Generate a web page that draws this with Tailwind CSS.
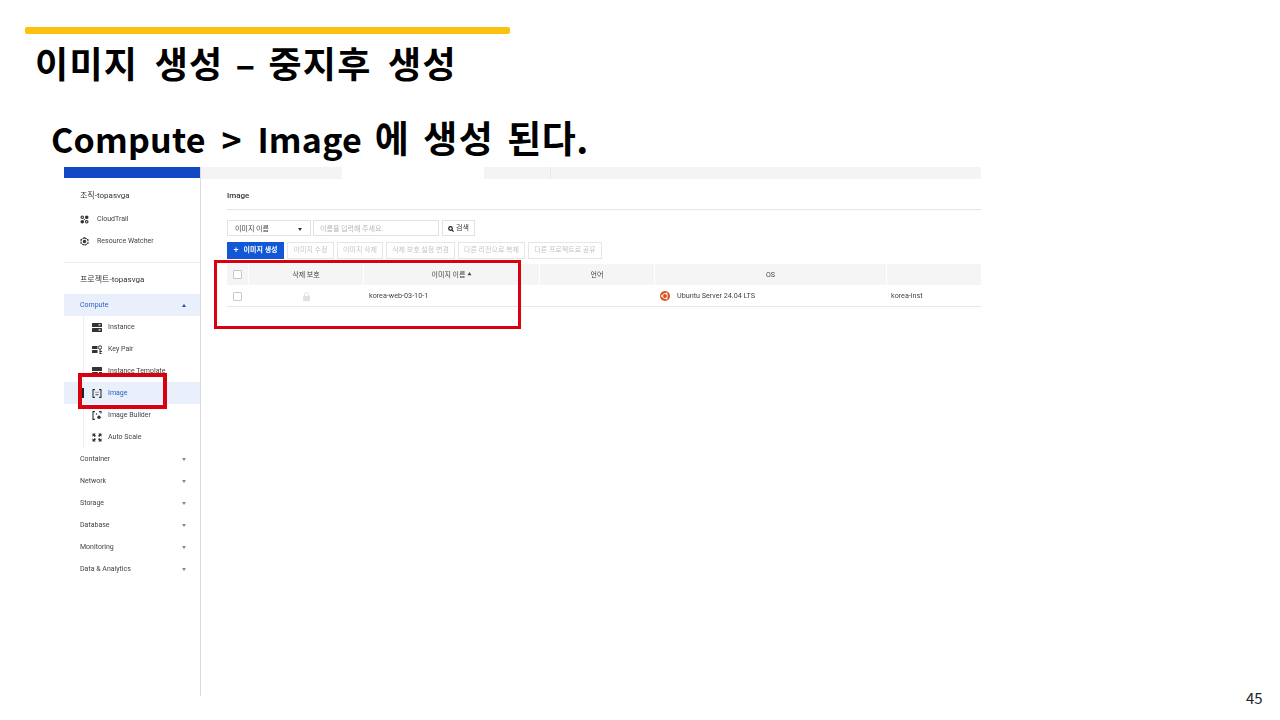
<!DOCTYPE html>
<html lang="ko">
<head>
    <meta charset="UTF-8">
    <title>이미지 생성 - 중지후 생성</title>
    <script src="https://cdn.jsdelivr.net/npm/@tailwindcss/browser@4"></script>
</head>
<body class="relative w-[1280px] h-[720px] overflow-hidden bg-white font-['Noto_Sans_CJK_KR',sans-serif]">
    <!-- Slide heading -->
    <div class="ml-[25px] mt-[27px] w-[485px] h-[7px] rounded-[2px] bg-[#fcc10f]"></div>
    <h1 class="ml-[35px] mt-[2px] h-[52px] flex gap-[12px] text-[36px] leading-[52px] font-bold text-black tracking-[1.3px] [word-spacing:5px] whitespace-pre"><span>이미지 생성</span><span>–</span><span>중지후 생성</span></h1>
    <h2 class="ml-[51px] mt-[23px] h-[52px] text-[37px] leading-[52px] font-bold text-black tracking-[1.5px] [word-spacing:1px] whitespace-pre"><span class="text-[34px] tracking-[0.2px] [word-spacing:6px]">Compute &gt; Image</span> 에 생성 <span class="tracking-[0.5px]">된다.</span></h2>

    <!-- Console screenshot -->
    <div class="absolute left-[64px] top-[167px] w-[917px] h-[529px] flex font-['Roboto','Noto_Sans_CJK_KR',sans-serif] text-[7px] text-[#444] blur-[0.3px]">
        <!-- Sidebar -->
        <aside class="w-[137px] shrink-0 border-r border-[#dcdcdc]">
            <div class="h-[11px] bg-[#1248c4]"></div>
            <div class="h-[30px] pl-4 pt-[6px] flex items-center text-[8px] text-[#333]">조직-topasvga</div>
            <div class="h-[22px] pl-4 pt-px flex items-center gap-[8px]">
                <svg class="w-[9px] h-[9px]" viewBox="0 0 10 10" fill="#333"><path d="M.5 2.500a2 2 0 0 1 4 0 2 2 0 0 1-4 0zM5.500 2.500a2 2 0 0 1 4 0 2 2 0 0 1-4 0zM.5 7.500a2 2 0 0 1 4 0 2 2 0 0 1-4 0zM5.500 7.500a2 2 0 0 1 4 0 2 2 0 0 1-4 0z"/><path d="M4 4 6 6M6 4 4 6" stroke="#333" stroke-width=".8"/><circle cx="2.500" cy="2.500" r=".7" fill="#fff"/><circle cx="7.500" cy="7.500" r=".7" fill="#fff"/></svg>
                <span>CloudTrail</span>
            </div>
            <div class="h-[22px] pl-4 pt-px flex items-center gap-[8px]">
                <svg class="w-[9px] h-[9px]" viewBox="0 0 10 10" fill="none" stroke="#333" stroke-width="1.3"><path d="M5 .8 8.800 3v4L5 9.200 1.200 7V3z" stroke-dasharray="2.600 .7"/><circle cx="5" cy="5" r="1.200" fill="#333"/></svg>
                <span>Resource Watcher</span>
            </div>
            <div class="h-[11px] border-b border-[#eeeeee]"></div>
            <div class="h-[31px] pl-4 pt-[2px] flex items-center text-[8px] text-[#333]">프로젝트-topasvga</div>

            <div class="h-[22px] pl-4 pr-[14px] flex items-center justify-between bg-[#e9effb] text-[#2a5fc4]">
                <span>Compute</span>
                <span class="w-0 h-0 border-x-[2.5px] border-x-transparent border-b-[3px] border-b-[#2a4f9c]"></span>
            </div>

            <!-- Compute children -->
            <div class="relative">
                <div class="absolute left-[19px] top-0 bottom-0 w-px bg-[#eeeeee]"></div>
                <div class="h-[22px] pl-7 flex items-center gap-[6px]">
                    <svg class="w-[10px] h-[9px]" viewBox="0 0 10 9" fill="#333"><rect width="10" height="4" rx=".6"/><rect y="5" width="10" height="4" rx=".6"/><rect x="6.500" y="1.300" width="2" height="1.200" fill="#fff"/><rect x="6.500" y="6.300" width="2" height="1.200" fill="#fff"/></svg>
                    <span>Instance</span>
                </div>
                <div class="h-[22px] pl-7 flex items-center gap-[6px]">
                    <svg class="w-[10px] h-[9px]" viewBox="0 0 10 9" fill="#333"><rect y="1" width="5.500" height="3" rx=".5"/><rect y="5" width="5.500" height="3" rx=".5"/><circle cx="8" cy="2.500" r="1.700" fill="none" stroke="#333"/><path d="M8 4v5M8 6.500h2M8 8.500h1.600" stroke="#333" fill="none"/></svg>
                    <span>Key Pair</span>
                </div>
                <div class="h-[22px] pl-7 flex items-center gap-[6px]">
                    <svg class="w-[10px] h-[9px]" viewBox="0 0 10 9" fill="#333"><rect width="10" height="4" rx=".6"/><rect y="5" width="6" height="4" rx=".6"/><path d="M7 5.500h3M7 8.500h3" stroke="#333" fill="none"/></svg>
                    <span>Instance Template</span>
                </div>
                <div class="relative h-[22px] pl-7 flex items-center gap-[6px] bg-[#e9effb] text-[#2a5fc4]">
                    <span class="absolute left-[18px] top-[6px] w-[2px] h-[10px] bg-[#222]"></span>
                    <svg class="w-[10px] h-[9px]" viewBox="0 0 10 9" fill="none" stroke="#333" stroke-width="1.100"><path d="M3 .6H1v7.800h2M7 .6h2v7.800H7"/><path d="M3.500 3.300h1M5.500 3.300h1M3.500 5.700h3" stroke-width=".9"/></svg>
                    <span>Image</span>
                </div>
                <div class="h-[22px] pl-7 flex items-center gap-[6px]">
                    <svg class="w-[10px] h-[9px]" viewBox="0 0 10 9" fill="none" stroke="#333" stroke-width="1.100"><path d="M3 .6H1v7.800h2M7 .6h2v2"/><circle cx="7" cy="6.300" r="1.700" fill="#333" stroke="none"/><circle cx="4.500" cy="3" r=".8" fill="#333" stroke="none"/></svg>
                    <span>Image Builder</span>
                </div>
                <div class="h-[22px] pl-7 flex items-center gap-[6px]">
                    <svg class="w-[10px] h-[9px]" viewBox="0 0 10 9" fill="#333"><path d="M.5.5h3.300L2.800 1.500 4 2.700 2.700 4 1.500 2.800.5 3.800zM9.500.5H6.200l1 1L6 2.700 7.300 4l1.200-1.200 1 1zM.5 8.500H3.800l-1-1L4 6.300 2.700 5 1.500 6.200l-1-1zM9.500 8.500H6.200l1-1L6 6.300 7.300 5l1.200 1.200 1-1z"/></svg>
                    <span>Auto Scale</span>
                </div>
            </div>

            <!-- Collapsed groups -->
            <div class="h-[22px] pl-4 pr-[14px] flex items-center justify-between"><span>Container</span><span class="w-0 h-0 border-x-[2.5px] border-x-transparent border-t-[3px] border-t-[#888]"></span></div>
            <div class="h-[22px] pl-4 pr-[14px] flex items-center justify-between"><span>Network</span><span class="w-0 h-0 border-x-[2.5px] border-x-transparent border-t-[3px] border-t-[#888]"></span></div>
            <div class="h-[22px] pl-4 pr-[14px] flex items-center justify-between"><span>Storage</span><span class="w-0 h-0 border-x-[2.5px] border-x-transparent border-t-[3px] border-t-[#888]"></span></div>
            <div class="h-[22px] pl-4 pr-[14px] flex items-center justify-between"><span>Database</span><span class="w-0 h-0 border-x-[2.5px] border-x-transparent border-t-[3px] border-t-[#888]"></span></div>
            <div class="h-[22px] pl-4 pr-[14px] flex items-center justify-between"><span>Monitoring</span><span class="w-0 h-0 border-x-[2.5px] border-x-transparent border-t-[3px] border-t-[#888]"></span></div>
            <div class="h-[22px] pl-4 pr-[14px] flex items-center justify-between"><span>Data &amp; Analytics</span><span class="w-0 h-0 border-x-[2.5px] border-x-transparent border-t-[3px] border-t-[#888]"></span></div>
        </aside>

        <!-- Main area -->
        <main class="flex-1 min-w-0">
            <!-- Tabs -->
            <div class="flex h-[12px]">
                <div class="w-[141px] bg-[#f4f4f4]"></div>
                <div class="w-[142px] bg-white"></div>
                <div class="w-[66px] bg-[#f4f4f4]"></div>
                <div class="flex-1 bg-[#f4f4f4] border-l border-[#e8e8e8]"></div>
            </div>

            <div class="pl-[26px]">
                <div class="h-[31px] pt-[3px] flex items-center border-b border-[#e6e6e6] text-[8px] font-medium text-[#333]">Image</div>

                <!-- Search -->
                <div class="mt-[10px] flex h-[16px] text-[7px]">
                    <div class="w-[84px] px-[7px] pt-[2px] flex items-center justify-between border border-[#e2e2e2] text-[#444]">
                        <span>이미지 이름</span>
                        <span class="mr-[1px] w-0 h-0 border-x-[2.5px] border-x-transparent border-t-[3px] border-t-[#333]"></span>
                    </div>
                    <div class="ml-[2px] w-[126px] px-[6px] pt-[2px] flex items-center border border-[#e2e2e2] text-[#b5b5b5]">이름을 입력해 주세요.</div>
                    <div class="ml-[3px] w-[33px] pt-px flex items-center justify-center gap-[2px] border border-[#e2e2e2] text-[#333]">
                        <svg class="w-[6px] h-[6px]" viewBox="0 0 6 6" fill="none" stroke="#222" stroke-width="1.200"><circle cx="2.500" cy="2.500" r="1.800"/><path d="m3.800 3.800 1.800 1.800"/></svg>
                        <span>검색</span>
                    </div>
                </div>

                <!-- Action buttons -->
                <div class="mt-[6px] flex h-[17px] text-[#c4c4c4]">
                    <div class="w-[57px] flex items-center justify-center gap-[5px] bg-[#1257d6] text-white font-bold"><span class="text-[9px] font-normal">+</span><span>이미지 생성</span></div>
                    <div class="ml-[3px] w-[47px] flex items-center justify-center border border-[#e6e6e6]">이미지 수정</div>
                    <div class="ml-[3px] w-[46px] flex items-center justify-center border border-[#e6e6e6]">이미지 삭제</div>
                    <div class="ml-[3px] w-[69px] flex items-center justify-center border border-[#e6e6e6]">삭제 보호 설정 변경</div>
                    <div class="ml-[3px] w-[67px] flex items-center justify-center border border-[#e6e6e6]">다른 리전으로 복제</div>
                    <div class="ml-[3px] w-[74px] flex items-center justify-center border border-[#e6e6e6]">다른 프로젝트로 공유</div>
                </div>

                <!-- Table header -->
                <div class="mt-[5px] flex h-[21px] items-center gap-px bg-white text-[#444]">
                    <div class="w-[21px] h-full bg-[#f5f5f5] flex items-center pl-[6px]"><span class="w-[9px] h-[9px] rounded-[1px] border border-[#c8c8c8] bg-white"></span></div>
                    <div class="w-[114px] h-full pt-px bg-[#f5f5f5] flex items-center justify-center">삭제 보호</div>
                    <div class="w-[175px] h-full pt-px bg-[#f5f5f5] flex items-center justify-center gap-[2px]">이미지 이름<span class="text-[4px]">▲</span></div>
                    <div class="w-[114px] h-full pt-px bg-[#f5f5f5] flex items-center justify-center">언어</div>
                    <div class="w-[231px] h-full pt-px bg-[#f5f5f5] flex items-center justify-center">OS</div>
                    <div class="flex-1 h-full bg-[#f5f5f5]"></div>
                </div>

                <!-- Table row -->
                <div class="flex h-[22px] pt-px items-center gap-px border-b border-[#e8e8e8] text-[7.2px] text-[#444]">
                    <div class="w-[21px] flex items-center pl-[6px]"><span class="w-[9px] h-[9px] rounded-[1px] border border-[#c8c8c8]"></span></div>
                    <div class="w-[114px] flex justify-center">
                        <svg class="w-[7px] h-[9px]" viewBox="0 0 7 9" fill="#e0e0e0"><path d="M1.500 4V2.500a2 2 0 0 1 4 0V4" fill="none" stroke="#e0e0e0"/><rect y="4" width="7" height="5" rx=".5"/></svg>
                    </div>
                    <div class="w-[175px] pl-[5px]">korea-web-03-10-1</div>
                    <div class="w-[114px]"></div>
                    <div class="w-[231px] pl-[5px] flex items-center gap-[7px]">
                        <svg class="w-[10px] h-[10px]" viewBox="0 0 10 10"><circle cx="5" cy="5" r="5" fill="#d5511d"/><circle cx="5" cy="5" r="2.500" fill="none" stroke="#fff" stroke-width=".9"/><circle cx="2" cy="5" r=".9" fill="#fff"/><circle cx="6.500" cy="2.400" r=".9" fill="#fff"/><circle cx="6.500" cy="7.600" r=".9" fill="#fff"/></svg>
                        <span>Ubuntu Server 24.04 LTS</span>
                    </div>
                    <div class="flex-1 pl-[4px]">korea-inst</div>
                </div>
            </div>
        </main>
    </div>

    <!-- Red highlight boxes -->
    <div class="absolute left-[78px] top-[373px] w-[89px] h-[36px] border-[4px] border-[#d9000f]"></div>
    <div class="absolute left-[214px] top-[260px] w-[307px] h-[69px] border-[3px] border-[#d9000f]"></div>

    <div class="absolute left-[1246px] top-[688px] text-[15px] leading-[20px] text-[#222]">45</div>
</body>
</html>
